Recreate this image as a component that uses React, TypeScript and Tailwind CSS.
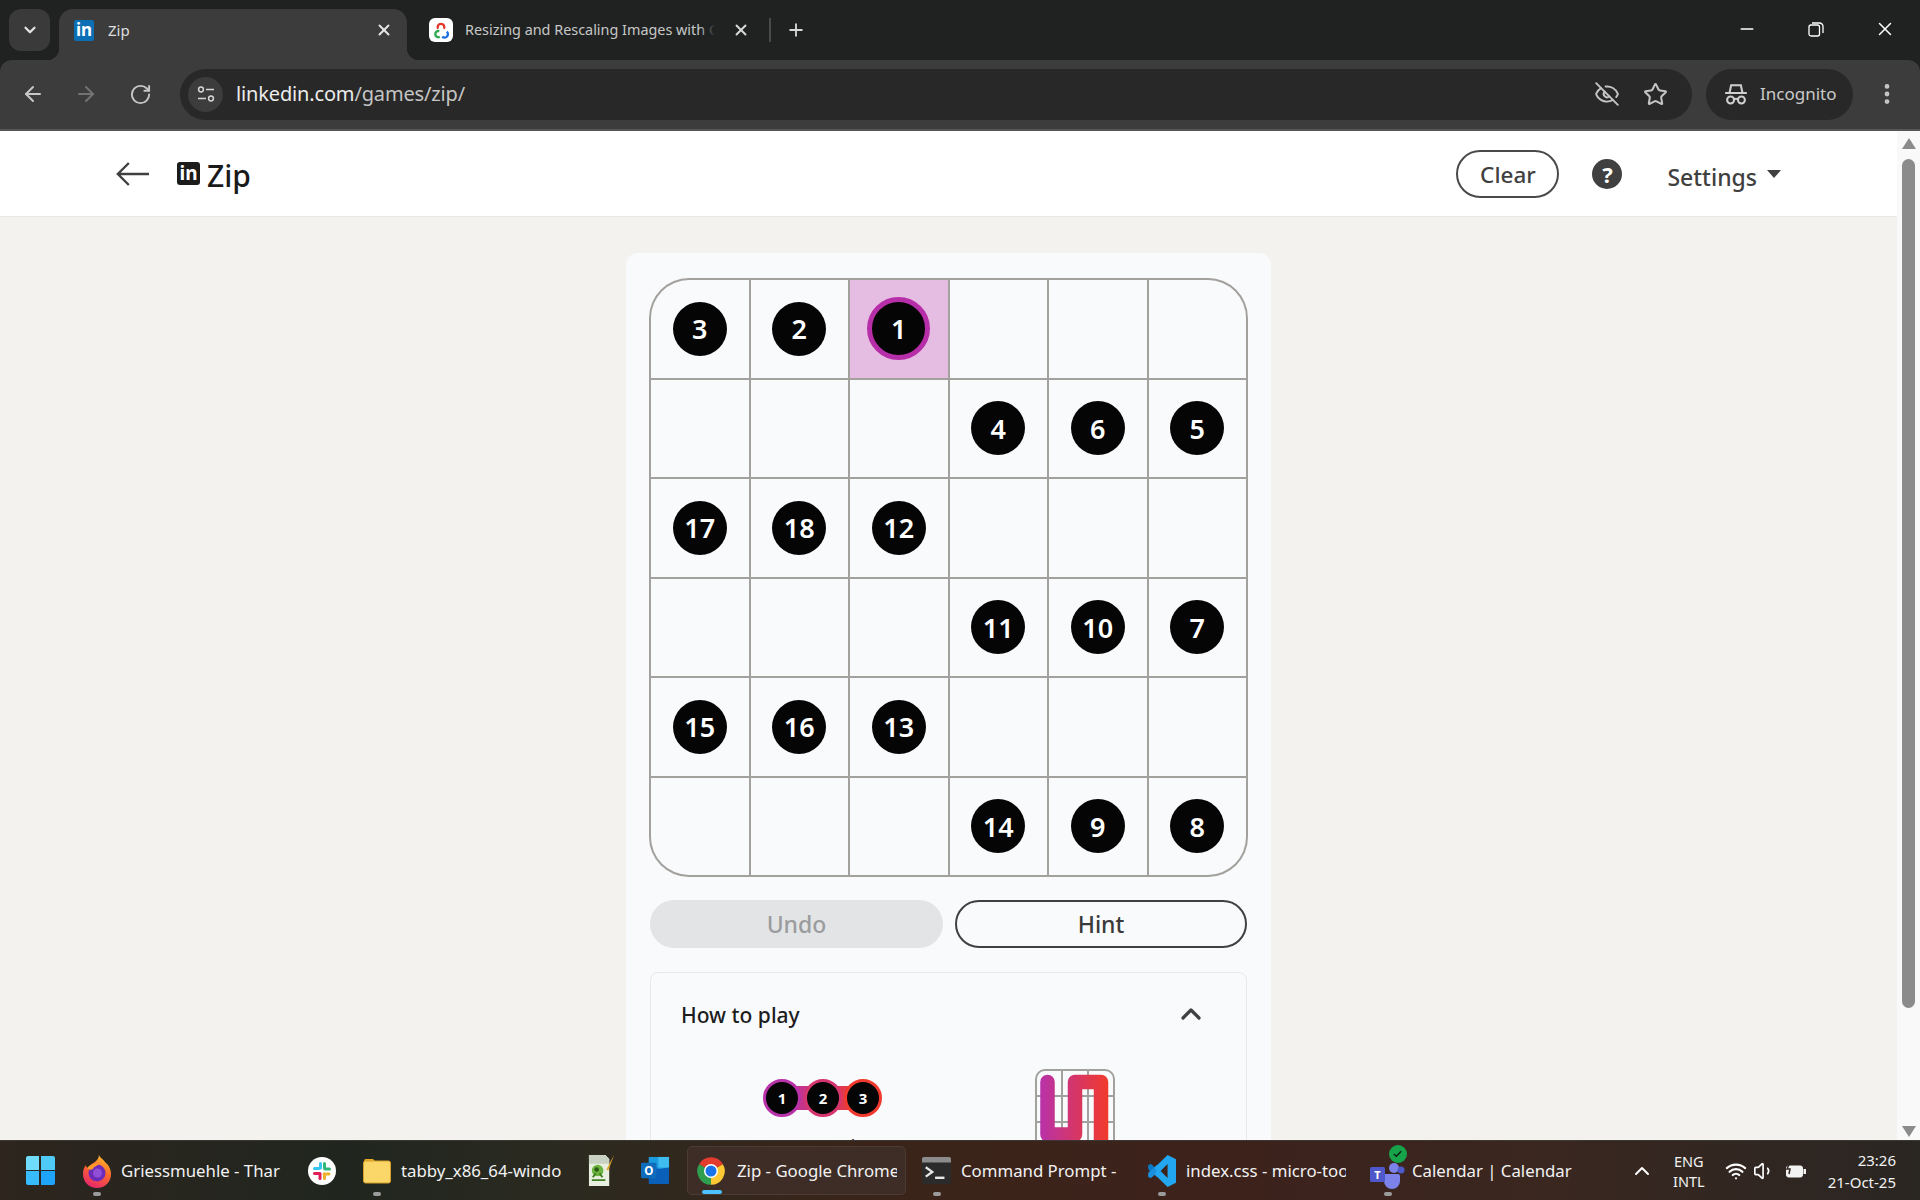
import React from "react";
import { ArrowLeft, ArrowRight, ChevronDown, ChevronUp, EyeOff, Plus, RotateCw, Star, X, Minus, EllipsisVertical, Volume1, Wifi } from "lucide-react";

const rows: (number | null)[][] = [
  [3, 2, 1, null, null, null],
  [null, null, null, 4, 6, 5],
  [17, 18, 12, null, null, null],
  [null, null, null, 11, 10, 7],
  [15, 16, 13, null, null, null],
  [null, null, null, 14, 9, 8],
];

function ChromeLogo() {
  return (
    <svg viewBox="0 0 24 24" className="w-[30px] h-[30px]">
      <path d="M12 12L2.47 6.5A11 11 0 0 1 21.53 6.5Z" fill="#e33b2e" />
      <path d="M12 12L21.53 6.5A11 11 0 0 1 12 23Z" fill="#fcc934" />
      <path d="M12 12L12 23A11 11 0 0 1 2.47 6.5Z" fill="#2f9e4f" />
      <circle cx="12" cy="12" r="5.6" fill="#fff" />
      <circle cx="12" cy="12" r="4.4" fill="#1a73e8" />
    </svg>
  );
}

function FirefoxLogo() {
  return (
    <svg viewBox="0 0 28 34" className="w-[28px] h-[34px]">
      <defs>
        <linearGradient id="ff1" x1="0.7" y1="0" x2="0.3" y2="1">
          <stop offset="0" stopColor="#ffbd2e" />
          <stop offset="0.45" stopColor="#ff6a2b" />
          <stop offset="1" stopColor="#e6246e" />
        </linearGradient>
      </defs>
      <path d="M16 1c1 3 4 4 6 7 1 1 2 2 3 3 2 3 3 6 3 9 0 8-6 14-14 14S0 28 0 20c0-4 1-7 3-9 0 2 1 3 2 3 1-3 4-4 7-6 2-2 4-4 4-7Z" fill="url(#ff1)" />
      <circle cx="14" cy="19" r="8.5" fill="#6e2bb8" />
      <circle cx="14.5" cy="19" r="4.5" fill="#8f4fd6" />
      <path d="M4 14c3-4 9-5 12-4-2 2-5 2-6 5-2 1-4 1-6-1Z" fill="#ff9a2b" />
    </svg>
  );
}

function SlackLogo() {
  return (
    <svg viewBox="0 0 28 28" className="w-[28px] h-[28px]">
      <circle cx="14" cy="14" r="14" fill="#fff" />
      <rect x="11" y="5" width="3" height="7.5" rx="1.5" fill="#36c5f0" />
      <rect x="5" y="10" width="7.5" height="3" rx="1.5" fill="#36c5f0" />
      <rect x="15.5" y="10.5" width="7.5" height="3" rx="1.5" fill="#2eb67d" />
      <rect x="15" y="5" width="3" height="7.5" rx="1.5" fill="#2eb67d" />
      <rect x="14.5" y="15.5" width="8" height="3" rx="1.5" fill="#ecb22e" />
      <rect x="15" y="15.5" width="3" height="7.5" rx="1.5" fill="#ecb22e" />
      <rect x="5" y="15" width="7.5" height="3" rx="1.5" fill="#e01e5a" />
      <rect x="10.5" y="15" width="3" height="8" rx="1.5" fill="#e01e5a" />
    </svg>
  );
}

function FolderLogo() {
  return (
    <svg viewBox="0 0 28 26" className="w-[28px] h-[26px]">
      <path d="M1 3a2 2 0 0 1 2-2h7l3 3h-12Z" fill="#e9a825" />
      <rect x="0.5" y="3" width="27" height="22" rx="2" fill="#fbd669" />
      <rect x="0.5" y="3" width="27" height="22" rx="2" fill="none" stroke="#d89f2b" strokeWidth="1" />
    </svg>
  );
}

function NotepadLogo() {
  return (
    <svg viewBox="0 0 28 34" className="w-[27px] h-[33px]">
      <path d="M1 1h17l4 4v28H1Z" fill="#e8efe0" />
      <path d="M1 1h17l4 4v5H1Z" fill="#c9d2c2" />
      <circle cx="10" cy="17" r="6" fill="#6cb33f" />
      <circle cx="9" cy="16" r="2.4" fill="#2c5a14" />
      <path d="M4 27h14M5 24l3-4M15 24l-3-4" stroke="#3f7d22" strokeWidth="2" />
      <path d="M27 1l-6 16-2-1Z" fill="#e2a52c" />
    </svg>
  );
}

function OutlookLogo() {
  return (
    <svg viewBox="0 0 30 30" className="w-[29px] h-[33px]">
      <rect x="8" y="1" width="21" height="22" fill="#1a9be0" />
      <rect x="18" y="1" width="11" height="11" fill="#40bdf0" />
      <rect x="8" y="12" width="10" height="11" fill="#0f78d4" />
      <path d="M8 15l21-3v16a1 1 0 0 1-1 1H9a1 1 0 0 1-1-1Z" fill="#0a5fb8" />
      <rect x="0" y="7" width="16" height="16" rx="1.5" fill="#0f6cbd" />
      <text x="8" y="19.5" textAnchor="middle" fontSize="12" fontWeight="700" fill="#fff" fontFamily="'Noto Sans',sans-serif">O</text>
    </svg>
  );
}

function CmdLogo() {
  return (
    <svg viewBox="0 0 31 29" className="w-[31px] h-[29px]">
      <rect width="31" height="29" rx="2" fill="#2b2b2b" />
      <path d="M0 2a2 2 0 0 1 2-2h27a2 2 0 0 1 2 2v4H0Z" fill="#8c8c8c" />
      <path d="M4 11l7 5-7 5" fill="none" stroke="#e8e8e8" strokeWidth="2.4" />
      <rect x="14" y="21" width="10" height="2.6" fill="#e8e8e8" />
    </svg>
  );
}

function VsCodeLogo() {
  return (
    <svg viewBox="0 0 31 34" className="w-[31px] h-[34px]">
      <path d="M1 11l3-1.8L15 19l-4.5 4.5L1.500 15.500Z" fill="#0a7ac6" />
      <path d="M1 23l3 1.800L15 15l-4.500-4.500L1.500 18.500Z" fill="#1a8fdb" />
      <path fillRule="evenodd" d="M22 0l9 4.500v25L22 34 8 20.500 10.500 17 8 13.500ZM22 9.500L14.500 17 22 24.500Z" fill="#22a6f0" />
    </svg>
  );
}

function TeamsLogo() {
  return (
    <div className="relative w-[36px] h-[38px] shrink-0">
      <svg viewBox="0 0 36 38" className="w-[36px] h-[38px]">
        <circle cx="24" cy="16" r="5" fill="#7b83eb" />
        <circle cx="31" cy="18" r="3.500" fill="#5059c9" />
        <path d="M14 22h14a2 2 0 0 1 2 2v5a8 8 0 0 1-16 0Z" fill="#7b83eb" />
        <rect x="0" y="15" width="15" height="15" rx="1.500" fill="#4f58ca" />
        <text x="7.500" y="26.500" textAnchor="middle" fontSize="11" fontWeight="700" fill="#fff" fontFamily="'Noto Sans',sans-serif">T</text>
      </svg>
      <div className="absolute right-[-1px] top-[-7px] w-[18px] h-[18px] rounded-full bg-[#16a34a] flex items-center justify-center">
        <svg viewBox="0 0 12 12" className="w-[11px] h-[11px]">
          <path d="M2 6.500l2.800 2.500L10 3.500" fill="none" stroke="#0b1f12" strokeWidth="1.600" />
        </svg>
      </div>
    </div>
  );
}

function TaskItem({ icon, text, dot, className }: { icon: React.ReactNode; text: string; dot?: boolean; className?: string }) {
  return (
    <div className={"relative flex items-center h-[49px] shrink-0 pl-[13px] " + (className ?? "")}>
      <div className="w-[29px] flex justify-center shrink-0">{icon}</div>
      <div className="ml-[10px] w-[160px] overflow-hidden whitespace-nowrap pt-[1px] text-[16.8px] text-[#f2f2f2]">{text}</div>
      {dot && <div className="absolute left-[24px] bottom-[-1px] w-[8px] h-[4px] rounded-full bg-[#9b9b9b]" />}
    </div>
  );
}

function IconSlot({ icon }: { icon: React.ReactNode }) {
  return <div className="relative flex items-center justify-center w-[54px] h-[49px] shrink-0">{icon}</div>;
}

function Cell({ n, idx }: { n: number | null; idx: number }) {
  const corner =
    idx === 0 ? "rounded-tl-[38px]" : idx === 5 ? "rounded-tr-[38px]" : idx === 30 ? "rounded-bl-[38px]" : idx === 35 ? "rounded-br-[38px]" : "";
  const active = n === 1;
  return (
    <div className={"flex items-center justify-center " + corner + (active ? " bg-[#e6bde2]" : " bg-[#f9fafc]")}>
      {n !== null && (
        <div
          className={
            "flex items-center justify-center rounded-full bg-[#050505] text-white text-[27px] font-semibold leading-none " +
            (active ? "w-[63px] h-[63px] border-[5px] border-[#b72fa8]" : "w-[54px] h-[54px]")
          }
        >
          {n}
        </div>
      )}
    </div>
  );
}

export default function App() {
  return (
    <div className="flex flex-col w-[1920px] h-[1200px] overflow-hidden bg-[#202221] font-['Noto_Sans','Open_Sans',sans-serif]">
      {/* Tab strip */}
      <div className="flex items-start h-[60px] shrink-0 bg-[#202221] text-[#c4c7c5] pt-[9px]">
        <div className="w-[41px] h-[42px] ml-[9px] rounded-[12px] bg-[#3a3a3a] flex items-center justify-center text-[#e3e3e3]">
          <ChevronDown size={18} strokeWidth={3} />
        </div>
        <div className="relative ml-[9px] w-[348px] h-[51px] rounded-t-[14px] bg-[#3c3c3c] flex items-center pl-[15px] pr-[14px] pb-[9px]">
          <div className="absolute left-[-12px] bottom-0 w-[12px] h-[12px] bg-[radial-gradient(circle_at_0_0,transparent_12px,#3c3c3c_12.5px)]" />
          <div className="absolute right-[-12px] bottom-0 w-[12px] h-[12px] bg-[radial-gradient(circle_at_100%_0,transparent_12px,#3c3c3c_12.5px)]" />
          <div className="w-[20px] h-[21px] rounded-[2px] bg-[#0a6fb5] text-white text-[17px] font-bold leading-[20px] text-center">in</div>
          <span className="ml-[14px] text-[15px] text-[#dedede]">Zip</span>
          <X size={18} strokeWidth={2.5} className="ml-auto text-[#e8e8e8]" />
        </div>
        <div className="flex items-center h-[42px] ml-[22px]">
          <div className="w-[24px] h-[24px] rounded-[6px] bg-white flex items-center justify-center">
            <svg viewBox="0 0 24 24" className="w-[20px] h-[20px]">
              <path d="M8.500 10.500A4 4 0 1 1 15.500 10.500" fill="none" stroke="#e5352b" strokeWidth="2.800" />
              <path d="M10 13.500A3.600 3.600 0 1 0 10.500 20" fill="none" stroke="#2fa84f" strokeWidth="2.800" />
              <path d="M13.500 20A3.600 3.600 0 0 0 19 14" fill="none" stroke="#1c6fe0" strokeWidth="2.800" />
            </svg>
          </div>
          <div className="relative ml-[12px] w-[250px] overflow-hidden whitespace-nowrap text-[14.4px] text-[#c6c8c7]">
            Resizing and Rescaling Images with OpenCV
            <div className="absolute right-0 top-0 bottom-0 w-[16px] bg-gradient-to-r from-transparent to-[#202221]" />
          </div>
          <X size={18} strokeWidth={2.5} className="ml-[17px] text-[#d8d8d8]" />
          <div className="ml-[19px] w-[2px] h-[24px] bg-[#4a4a4a]" />
          <Plus size={20} strokeWidth={2.2} className="ml-[15px] text-[#d8d8d8]" />
        </div>
        <div className="flex items-center h-[40px] ml-auto">
          <Minus size={20} strokeWidth={1.6} className="text-white mr-[51px]" />
          <svg viewBox="0 0 16 16" className="w-[16px] h-[16px] mr-[50px]">
            <rect x="1" y="4" width="10.500" height="11" rx="2" fill="none" stroke="#fff" strokeWidth="1.300" />
            <path d="M4 2h7.500A3.500 3.500 0 0 1 15 5.500V12" fill="none" stroke="#fff" strokeWidth="1.300" />
          </svg>
          <X size={22} strokeWidth={1.6} className="text-white mr-[24px]" />
        </div>
      </div>

      {/* Toolbar */}
      <div className="flex items-center h-[71px] shrink-0 rounded-t-[12px] bg-[#3c3c3c] border-b-2 border-[#555555] pb-[1px] text-[#c7c7c7]">
        <ArrowLeft size={24} strokeWidth={2} className="ml-[21px]" />
        <ArrowRight size={24} strokeWidth={2} className="ml-[29px] text-[#737373]" />
        <RotateCw size={23} strokeWidth={2} className="ml-[31px]" />
        <div className="ml-[28px] w-[1512px] h-[51px] rounded-full bg-[#282828] flex items-center pl-[8px] pr-[24px]">
          <div className="w-[35px] h-[35px] rounded-full bg-[#3c3c3c] flex items-center justify-center">
            <svg viewBox="0 0 20 20" className="w-[20px] h-[20px]">
              <circle cx="5" cy="5.500" r="2.400" fill="none" stroke="#d6d6d6" strokeWidth="1.500" />
              <path d="M10 5.500h8M2 14.500h8" stroke="#d6d6d6" strokeWidth="1.700" />
              <circle cx="15" cy="14.500" r="2.400" fill="none" stroke="#d6d6d6" strokeWidth="1.500" />
            </svg>
          </div>
          <div className="ml-[13px] text-[20px] tracking-[-0.15px] text-[#c4c4c4]">
            <span className="text-[#ececec]">linkedin.com</span>/games/zip/
          </div>
          <EyeOff size={26} strokeWidth={1.8} className="ml-auto text-[#c4c4c4]" />
          <Star size={25} strokeWidth={2} className="ml-[23px] text-[#c4c4c4]" />
        </div>
        <div className="ml-[14px] w-[147px] h-[51px] rounded-full bg-[#282828] flex items-center pl-[17px]">
          <svg viewBox="0 0 24 24" className="w-[26px] h-[26px]">
            <path d="M2 11h20M6 11l1.500-7h9L18 11" fill="none" stroke="#cfcfcf" strokeWidth="1.900" />
            <circle cx="7" cy="17.500" r="3.200" fill="none" stroke="#cfcfcf" strokeWidth="1.900" />
            <circle cx="17" cy="17.500" r="3.200" fill="none" stroke="#cfcfcf" strokeWidth="1.900" />
            <path d="M10 16.500h4" stroke="#cfcfcf" strokeWidth="1.900" />
          </svg>
          <span className="ml-[11px] text-[17px] text-[#cacaca]">Incognito</span>
        </div>
        <EllipsisVertical size={26} strokeWidth={2.4} className="ml-[21px] text-[#c7c7c7]" />
      </div>

      {/* Page */}
      <div className="flex flex-1 min-h-0 overflow-hidden">
        <div className="flex flex-col flex-1 min-w-0 bg-[#f3f2ee] overflow-hidden">
          <div className="flex items-center h-[86px] shrink-0 bg-white border-b border-[#e8e8e6] pl-[116px]">
            <svg viewBox="0 0 36 28" className="w-[33px] h-[26px]">
              <path d="M36 14H3M14 2L2 14l12 12" fill="none" stroke="#404040" strokeWidth="2.600" />
            </svg>
            <div className="ml-[28px] w-[23px] h-[23px] rounded-[3px] bg-[#1c1c1c] text-white text-[19px] font-bold leading-[22px] text-center">in</div>
            <span className="ml-[7px] mt-[4px] text-[30px] font-medium text-[#1a1a1a] leading-none">Zip</span>
            <div className="ml-auto w-[103px] h-[48px] rounded-full border-2 border-[#4a4a4a] flex items-center justify-center pt-[3px] text-[22.5px] font-medium text-[#3f3f3f]">Clear</div>
            <div className="ml-[33px] w-[30px] h-[30px] rounded-full bg-[#404040] flex items-center justify-center text-white text-[22px] font-bold leading-none">?</div>
            <span className="ml-[45px] text-[23px] font-medium text-[#404040] mt-[8px]">Settings</span>
            <div className="ml-[10px] w-0 h-0 border-x-[7.500px] border-x-transparent border-t-[8px] border-t-[#404040]" />
            <div className="w-[116px] shrink-0" />
          </div>

          <div className="mt-[36px] self-center w-[645px] rounded-t-[12px] bg-[#f9fafc] px-[24px] pt-[25px] flex flex-col shrink-0">
            <div className="grid grid-cols-6 grid-rows-6 gap-[2px] p-[2px] w-[599px] h-[599px] ml-[-1px] rounded-[40px] overflow-hidden bg-[#a3a19d]">
              {rows.flat().map((n, i) => (
                <Cell key={i} n={n} idx={i} />
              ))}
            </div>
            <div className="flex gap-[12px] mt-[23px]">
              <div className="w-[293px] h-[48px] rounded-full bg-[#e3e4e6] flex items-center justify-center text-[23px] font-medium text-[#9b9c9e]">Undo</div>
              <div className="w-[292px] h-[48px] rounded-full border-2 border-[#404040] flex items-center justify-center text-[23px] font-medium text-[#3a3a3a]">Hint</div>
            </div>
            <div className="mt-[24px] rounded-[8px] border border-[#e6e8ea] h-[400px] px-[31px]">
              <div className="flex items-center justify-between mt-[26px] h-[32px]">
                <span className="ml-[-1px] mt-[2px] text-[21px] font-medium text-[#1d1d1d]">How to play</span>
                <ChevronUp size={32} strokeWidth={2.4} className="text-[#404040] mr-[8px] mt-[-2px]" />
              </div>
              <div className="grid grid-cols-[252px_252px] justify-center mt-[38px]">
                <div className="flex flex-col items-center pt-[9px]">
                  <svg viewBox="0 0 120 40" className="w-[120px] h-[40px]">
                    <defs>
                      <linearGradient id="dots" x1="0" x2="1" y1="0" y2="0">
                        <stop offset="0" stopColor="#b832a9" />
                        <stop offset="1" stopColor="#f03a2e" />
                      </linearGradient>
                    </defs>
                    <rect x="19" y="8" width="82" height="24" fill="url(#dots)" />
                    {[
                      { x: 19, c: "#b832a9", t: "1" },
                      { x: 60, c: "#d5366f", t: "2" },
                      { x: 100, c: "#f03a2e", t: "3" },
                    ].map((d) => (
                      <g key={d.t}>
                        <circle cx={d.x} cy="20" r="17.500" fill="#050505" stroke={d.c} strokeWidth="3" />
                        <text x={d.x} y="25.500" textAnchor="middle" fontSize="15" fontWeight="700" fill="#fff" fontFamily="'Noto Sans',sans-serif">{d.t}</text>
                      </g>
                    ))}
                  </svg>
                  <div className="mt-[14px] text-[20px] text-[#333333]">Connect dots</div>
                </div>
                <div className="flex justify-center">
                  <svg viewBox="0 0 80 80" className="w-[80px] h-[80px]">
                    <defs>
                      <linearGradient id="trail" gradientUnits="userSpaceOnUse" x1="5" x2="72" y1="0" y2="0">
                        <stop offset="0" stopColor="#b832a9" />
                        <stop offset="1" stopColor="#f03a2e" />
                      </linearGradient>
                    </defs>
                    <rect x="1" y="1" width="78" height="90" rx="9" fill="none" stroke="#a3a19d" strokeWidth="2" />
                    <path d="M27 1v90M53 1v90M1 27h78M1 53h78" stroke="#a3a19d" strokeWidth="2" />
                    <path d="M12.500 13V65.500H40V13H66V80" fill="none" stroke="url(#trail)" strokeWidth="14.500" strokeLinecap="round" strokeLinejoin="round" />
                  </svg>
                </div>
              </div>
            </div>
          </div>
        </div>
        {/* Scrollbar */}
        <div className="flex flex-col items-center w-[23px] shrink-0 bg-[#f9f9f9] pt-[7px]">
          <div className="w-0 h-0 border-x-[7.500px] border-x-transparent border-b-[11px] border-b-[#8b8b8b]" />
          <div className="mt-[10px] w-[13px] h-[849px] rounded-full bg-[#8b8b8b]" />
          <div className="mt-auto mb-[3px] w-0 h-0 border-x-[7.500px] border-x-transparent border-t-[11px] border-t-[#8b8b8b]" />
        </div>
      </div>

      {/* Taskbar */}
      <div className="flex items-center h-[60px] shrink-0 border-t border-[#3b3733] bg-[linear-gradient(90deg,#2d251e_0%,#20261f_18%,#2c2a20_30%,#3a2419_45%,#3d221c_65%,#3a2720_80%,#2a2622_100%)] pl-[13px]">
        <IconSlot
          icon={
            <div className="grid grid-cols-2 gap-[1.500px] w-[29px] h-[29px]">
              <div className="rounded-tl-[2px] bg-[#6fdcfb]" />
              <div className="rounded-tr-[2px] bg-[#4fcbfa]" />
              <div className="rounded-bl-[2px] bg-[#38bbfb]" />
              <div className="rounded-br-[2px] bg-[#1ea5fb]" />
            </div>
          }
        />
        <TaskItem icon={<FirefoxLogo />} text="Griessmuehle - Thar" dot className="w-[226px] ml-[2px]" />
        <IconSlot icon={<SlackLogo />} />
        <TaskItem icon={<FolderLogo />} text="tabby_x86_64-windows" dot className="w-[225px]" />
        <IconSlot icon={<NotepadLogo />} />
        <IconSlot icon={<OutlookLogo />} />
        <div className="relative flex items-center w-[219px] h-[49px] ml-[5px] shrink-0 rounded-[5px] bg-[#3e2d26] border border-[#4b3b33] pl-[8px]">
          <ChromeLogo />
          <div className="ml-[11px] w-[160px] overflow-hidden whitespace-nowrap pt-[1px] text-[16.8px] text-[#f2f2f2]">Zip - Google Chrome</div>
          <div className="absolute left-[14px] bottom-[0px] w-[20px] h-[4px] rounded-full bg-[#4cc2ff]" />
        </div>
        <TaskItem icon={<CmdLogo />} text="Command Prompt - npm" dot className="w-[225px] ml-[3px]" />
        <TaskItem icon={<VsCodeLogo />} text="index.css - micro-tools" dot className="w-[226px]" />
        <TaskItem icon={<TeamsLogo />} text="Calendar | Calendar" dot className="w-[226px]" />
        <ChevronUp size={24} strokeWidth={2} className="ml-[44px] text-white" />
        <div className="ml-[19px] flex flex-col items-center text-[14.5px] leading-[20px] text-[#f2f2f2]">
          <span>ENG</span>
          <span>INTL</span>
        </div>
        <Wifi size={22} strokeWidth={2.4} className="ml-[20px] text-white" />
        <Volume1 size={22} strokeWidth={1.8} className="ml-[6px] text-white" />
        <svg viewBox="0 0 22 22" className="ml-[10px] w-[22px] h-[22px]">
          <rect x="1.500" y="6" width="16" height="11" rx="2" fill="#f2f2f2" stroke="#f2f2f2" />
          <rect x="18.500" y="9" width="2.500" height="5" fill="#f2f2f2" />
          <path d="M5 2L2 9h3l-1 5" fill="none" stroke="#2f2721" strokeWidth="1.500" />
        </svg>
        <div className="ml-auto mr-[24px] flex flex-col items-end text-[15px] leading-[22px] text-[#f2f2f2]">
          <span>23:26</span>
          <span>21-Oct-25</span>
        </div>
      </div>
    </div>
  );
}
